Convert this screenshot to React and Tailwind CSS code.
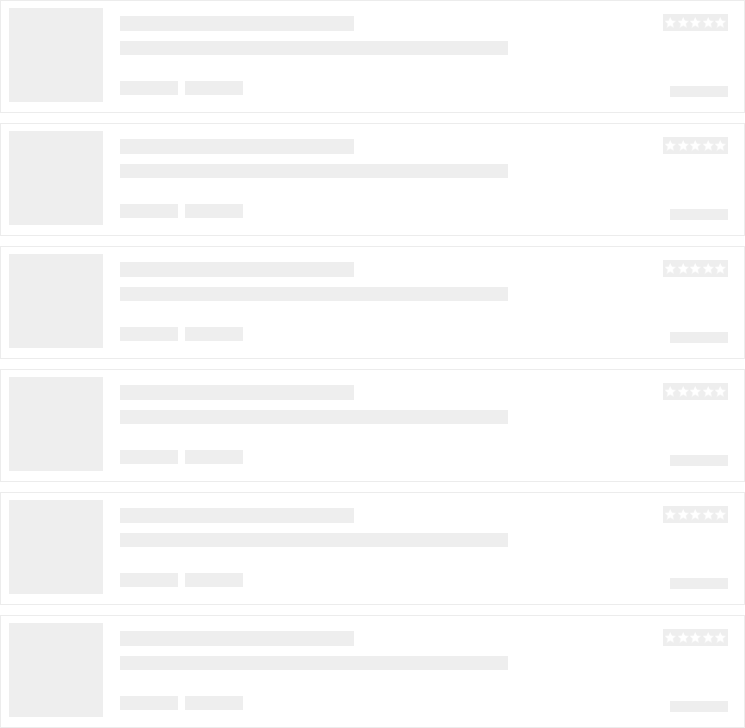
import React from 'react';

function Star() {
  return (
    <svg width="12.5" height="13" viewBox="0 0 24 24">
      <polygon
        points="12,1 15.2,8 23,8.9 17.2,14.2 18.8,22 12,18 5.2,22 6.8,14.2 1,8.9 8.8,8"
        fill="#ffffff"
        stroke="#f2f2f2"
        strokeWidth="1"
      />
    </svg>
  );
}

function SkeletonCard() {
  return (
    <div className="flex h-[113px] border border-[#ececec] bg-white">
      <div className="ml-[8px] mt-[7px] h-[94px] w-[94px] shrink-0 bg-[#eeeeee]" />
      <div className="ml-[17px] flex flex-1 flex-col">
        <div className="mt-[15px] h-[15px] w-[234px] bg-[#eeeeee]" />
        <div className="mt-[10px] h-[14px] w-[388px] bg-[#eeeeee]" />
        <div className="mt-[26px] flex gap-[7px]">
          <div className="h-[14px] w-[58px] bg-[#eeeeee]" />
          <div className="h-[14px] w-[58px] bg-[#eeeeee]" />
        </div>
      </div>
      <div className="mr-[16px] flex flex-col items-end">
        <div className="mt-[13px] flex h-[17px] w-[65px] items-center justify-center bg-[#eeeeee]">
          <Star />
          <Star />
          <Star />
          <Star />
          <Star />
        </div>
        <div className="mt-[55px] h-[11px] w-[58px] bg-[#eeeeee]" />
      </div>
    </div>
  );
}

export default function App() {
  const cards = [0, 1, 2, 3, 4, 5];
  return (
    <div className="flex w-[745px] flex-col gap-[10px] bg-white">
      {cards.map((i) => (
        <SkeletonCard key={i} />
      ))}
    </div>
  );
}
